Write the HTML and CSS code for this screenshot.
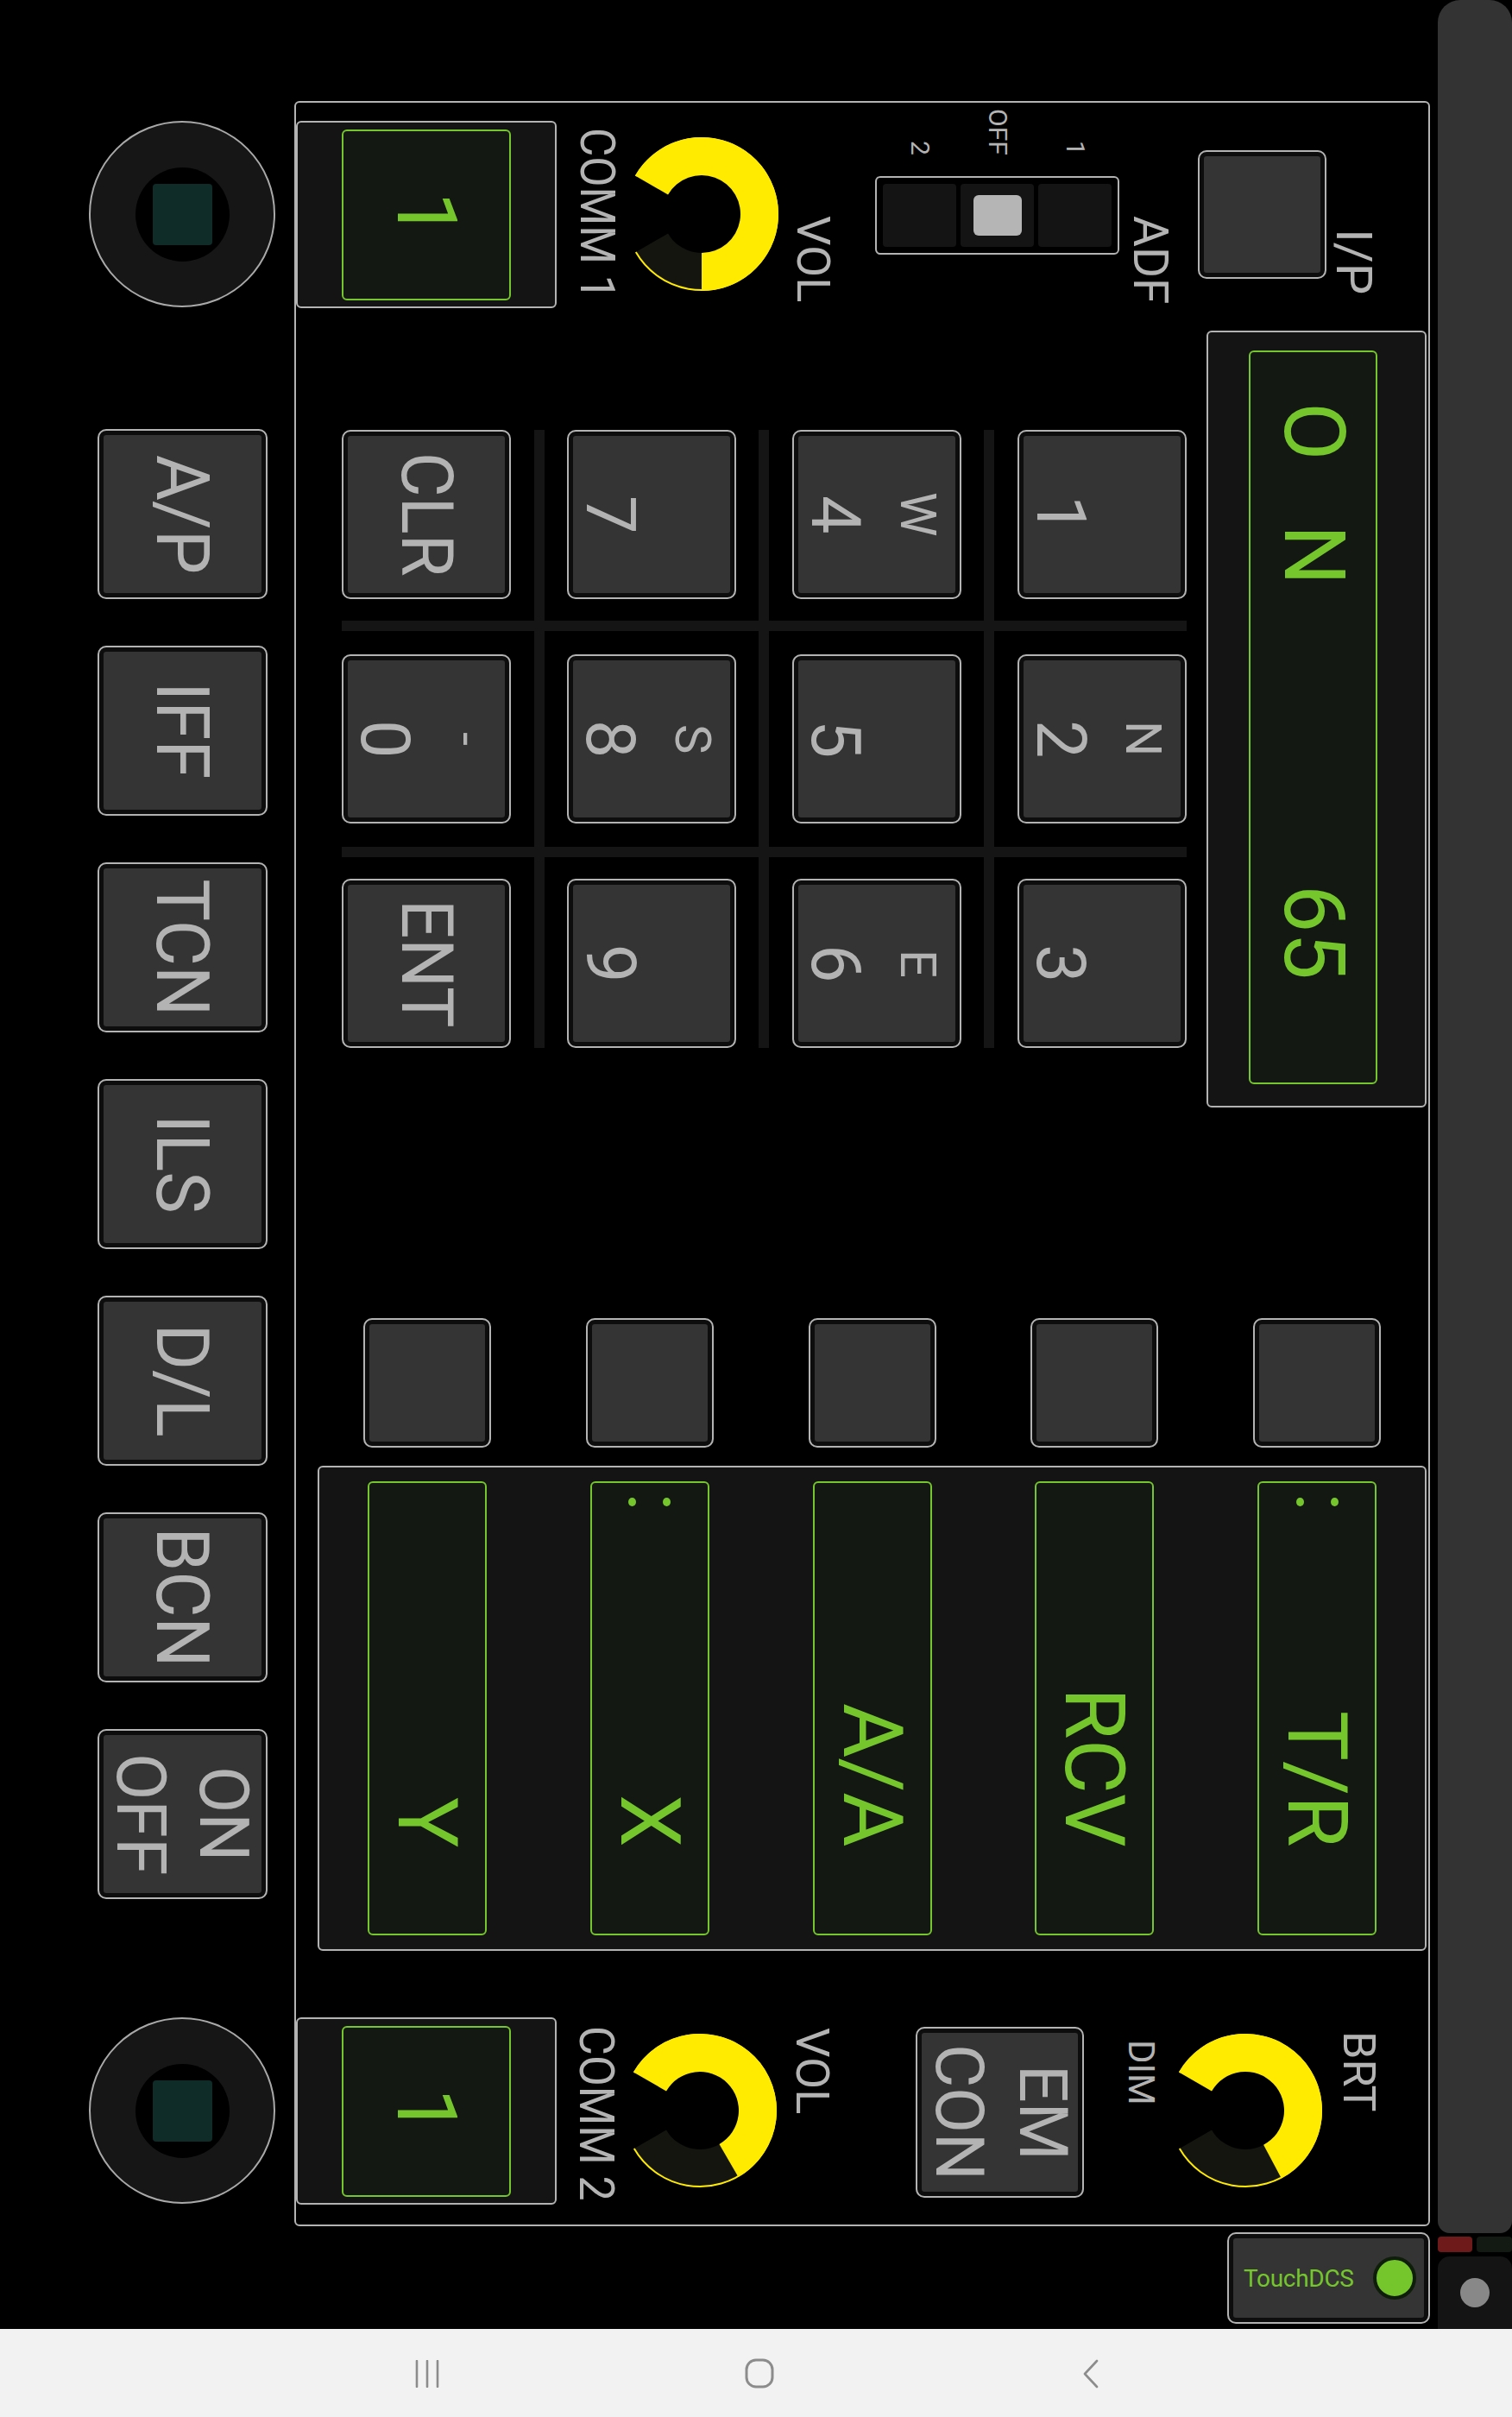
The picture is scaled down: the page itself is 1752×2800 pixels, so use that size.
FILE: index.html
```html
<!DOCTYPE html>
<html lang="en">
<head>
<meta charset="utf-8">
<title>TouchDCS</title>
<link rel="stylesheet" href="styles.css">
</head>
<body>
<div class="screen">
  <div class="app">
    <div class="leftcol">
      <div class="jack jack-top"><div class="jack-hole"><div class="jack-core"></div></div></div>
      <div class="sidebtns">
        <div class="btn side"><span class="vt">A/P</span></div>
        <div class="btn side"><span class="vt">IFF</span></div>
        <div class="btn side"><span class="vt">TCN</span></div>
        <div class="btn side"><span class="vt">ILS</span></div>
        <div class="btn side"><span class="vt">D/L</span></div>
        <div class="btn side"><span class="vt">BCN</span></div>
        <div class="btn side"><span class="vt two">ON<br>OFF</span></div>
      </div>
      <div class="jack jack-bot"><div class="jack-hole"><div class="jack-core"></div></div></div>
    </div>

    <div class="midcol">
      <div class="panel">
        <div class="sec-top">
          <div class="comm"><div class="lcd"><span class="vt">1</span></div></div>
          <div class="lbl l-comm1">COMM 1</div>
          <svg class="knob k-top" viewBox="0 0 180 180">
            <path d="M12.93 45.5A89 89 0 1 1 12.93 134.5L51.03 112.5A45 45 0 1 0 51.03 67.5Z" fill="#15150f"/>
            <path d="M13.8 46A88 88 0 1 1 13.8 134" fill="none" stroke="#ffeb00" stroke-width="2"/>
            <path d="M12.93 45.5A89 89 0 1 1 90 179L90 135A45 45 0 1 0 51.03 67.5Z" fill="#ffeb00"/>
          </svg>
          <div class="lbl l-vol1">VOL</div>
          <div class="adf">
            <div class="adf-labels">
              <div class="adf-cell"><span class="vt">2</span></div>
              <div class="adf-cell"><span class="vt">OFF</span></div>
              <div class="adf-cell"><span class="vt">1</span></div>
            </div>
            <div class="switch">
              <div class="sw-cell"></div>
              <div class="sw-cell"><div class="sw-knob"></div></div>
              <div class="sw-cell"></div>
            </div>
          </div>
          <div class="lbl l-adf">ADF</div>
          <div class="btn ip"></div>
          <div class="lbl l-ip">I/P</div>
        </div>

        <div class="sec-mid">
          <div class="keypad">
            <div class="btn key"><span class="vt">CLR</span></div>
            <div class="btn key dual"><div class="kcol d"><span class="vt">7</span></div><div class="kcol l"></div></div>
            <div class="btn key dual"><div class="kcol d"><span class="vt">4</span></div><div class="kcol l"><span class="vt">W</span></div></div>
            <div class="btn key dual"><div class="kcol d"><span class="vt">1</span></div><div class="kcol l"></div></div>

            <div class="btn key dual"><div class="kcol d"><span class="vt">0</span></div><div class="kcol l"><span class="vt">-</span></div></div>
            <div class="btn key dual"><div class="kcol d"><span class="vt">8</span></div><div class="kcol l"><span class="vt">S</span></div></div>
            <div class="btn key dual"><div class="kcol d"><span class="vt">5</span></div><div class="kcol l"></div></div>
            <div class="btn key dual"><div class="kcol d"><span class="vt">2</span></div><div class="kcol l"><span class="vt">N</span></div></div>

            <div class="btn key"><span class="vt">ENT</span></div>
            <div class="btn key dual"><div class="kcol d"><span class="vt">9</span></div><div class="kcol l"></div></div>
            <div class="btn key dual"><div class="kcol d"><span class="vt">6</span></div><div class="kcol l"><span class="vt">E</span></div></div>
            <div class="btn key dual"><div class="kcol d"><span class="vt">3</span></div><div class="kcol l"></div></div>
          </div>
          <div class="disp">
            <div class="lcd">
              <span class="vt d-o">O</span>
              <span class="vt d-n">N</span>
              <span class="vt d-65">65</span>
            </div>
          </div>
        </div>

        <div class="sec-modes">
          <div class="smallbtns">
            <div class="btn sq"></div>
            <div class="btn sq"></div>
            <div class="btn sq"></div>
            <div class="btn sq"></div>
            <div class="btn sq"></div>
          </div>
          <div class="modes">
            <div class="lcd mode"><span class="vt">Y</span></div>
            <div class="lcd mode"><div class="dots"><i></i><i></i></div><span class="vt">X</span></div>
            <div class="lcd mode"><span class="vt">A/A</span></div>
            <div class="lcd mode"><span class="vt">RCV</span></div>
            <div class="lcd mode"><div class="dots"><i></i><i></i></div><span class="vt">T/R</span></div>
          </div>
        </div>

        <div class="sec-bot">
          <div class="comm comm2"><div class="lcd"><span class="vt">1</span></div></div>
          <div class="lbl l-comm2">COMM 2</div>
          <svg class="knob k-b1" viewBox="0 0 180 180">
            <path d="M12.93 45.5A89 89 0 1 1 12.93 134.5L51.03 112.5A45 45 0 1 0 51.03 67.5Z" fill="#15150f"/>
            <path d="M13.8 46A88 88 0 1 1 13.8 134" fill="none" stroke="#ffeb00" stroke-width="2"/>
            <path d="M12.93 45.5A89 89 0 1 1 134.5 167.08L112.5 128.97A45 45 0 1 0 51.03 67.5Z" fill="#ffeb00"/>
          </svg>
          <div class="lbl l-vol2">VOL</div>
          <div class="btn emcon"><span class="vt">EM<br>CON</span></div>
          <div class="lbl l-dim">DIM</div>
          <svg class="knob k-b2" viewBox="0 0 180 180">
            <path d="M12.93 45.5A89 89 0 1 1 12.93 134.5L51.03 112.5A45 45 0 1 0 51.03 67.5Z" fill="#15150f"/>
            <path d="M13.8 46A88 88 0 1 1 13.8 134" fill="none" stroke="#ffeb00" stroke-width="2"/>
            <path d="M12.93 45.5A89 89 0 1 1 131.78 168.58L111.13 129.73A45 45 0 1 0 51.03 67.5Z" fill="#ffeb00"/>
          </svg>
          <div class="lbl l-brt">BRT</div>
        </div>
      </div>

      <div class="btn status">
        <span class="status-text">TouchDCS</span>
        <span class="led"></span>
      </div>
    </div>

    <div class="rightcol">
      <div class="sbar"></div>
      <div class="tabs"><span class="tab-r"></span><span class="tab-g"></span></div>
      <div class="thumbbox"><span class="thumb"></span></div>
    </div>
  </div>

  <div class="navbar">
    <svg class="nv nv-recent" width="30" height="32" viewBox="0 0 30 32">
      <path d="M3 1V31M15 1V31M27 1V31" stroke="#8c8c8c" stroke-width="2.6" stroke-linecap="round"/>
    </svg>
    <svg class="nv nv-home" width="34" height="35" viewBox="0 0 34 35">
      <rect x="2" y="2" width="30" height="31" rx="11" fill="none" stroke="#8c8c8c" stroke-width="3"/>
    </svg>
    <svg class="nv nv-back" width="20" height="34" viewBox="0 0 20 34">
      <path d="M17 2L3 17L17 32" fill="none" stroke="#8c8c8c" stroke-width="2.6" stroke-linecap="round" stroke-linejoin="round"/>
    </svg>
  </div>
</div>
</body>
</html>
```

FILE: styles.css
```css
* { box-sizing: border-box; margin: 0; padding: 0; }
html, body { background: #000; }
body {
  width: 1752px;
  height: 2800px;
  overflow: hidden;
  font-family: Roboto, "Noto Sans", "Liberation Sans", sans-serif;
  color: #b3b3b3;
}
.screen { display: flex; flex-direction: column; width: 1752px; height: 2800px; }
.app { display: flex; height: 2698px; flex: none; }

.vt { writing-mode: vertical-rl; white-space: nowrap; text-align: center; display: block; }

/* generic button */
.btn {
  border: 2px solid #b3b3b3;
  border-radius: 10px;
  background: #343434;
  box-shadow: inset 0 0 0 5px #0d0d0d;
  display: flex;
  align-items: center;
  justify-content: center;
  flex: none;
  color: #b3b3b3;
}

/* green displays */
.lcd {
  border: 2px solid #74c62c;
  border-radius: 6px;
  background: #131812;
  color: #74c62c;
  display: flex;
  align-items: center;
  justify-content: center;
  flex: none;
}

/* left column */
.leftcol { margin-left: 103px; width: 216px; display: flex; flex-direction: column; align-items: center; flex: none; }
.jack {
  width: 216px; height: 216px; border-radius: 50%;
  border: 2px solid #a9a9a9; background: #161616;
  display: flex; align-items: center; justify-content: center; flex: none;
}
.jack-top { margin-top: 140px; }
.jack-bot { margin-top: 137px; }
.jack-hole { width: 109px; height: 109px; border-radius: 50%; background: #000; display: flex; align-items: center; justify-content: center; }
.jack-core { width: 69px; height: 71px; border-radius: 4px; background: #0f2c28; }
.sidebtns { margin-top: 141px; display: flex; flex-direction: column; gap: 54px; }
.side { width: 197px; height: 197px; }
.side .vt { font-size: 86px; line-height: 96px; transform: scaleY(0.95); }
.side .vt.two { font-size: 79px; line-height: 96px; transform: none; }

/* middle column */
.midcol { margin-left: 22px; width: 1316px; display: flex; flex-direction: column; flex: none; }
.panel {
  margin-top: 117px; width: 1316px; height: 2462px;
  border: 2px solid #b3b3b3; border-radius: 6px;
  display: flex; flex-direction: column; flex: none;
}

.lbl {
  writing-mode: vertical-rl; white-space: nowrap;
  width: 50px; line-height: 50px; flex: none; color: #b3b3b3;
}

/* top section */
.sec-top { display: flex; align-items: flex-start; height: 240px; flex: none; }
.comm {
  width: 302px; height: 217px; margin-top: 21px;
  border: 2px solid #b3b3b3; border-radius: 6px; background: #141414;
  display: flex; align-items: center; justify-content: center; flex: none;
}
.comm2 { margin-top: 0; }
.comm .lcd { width: 196px; height: 198px; }
.comm .vt { font-size: 96px; line-height: 100px; }
.l-comm1 { margin-left: 21.5px; margin-top: 29px; height: 194px; font-size: 55px; transform: scaleY(0.93); transform-origin: 50% 0; }
.knob { width: 180px; height: 180px; flex: none; display: block; }
.k-top { margin-left: 6.5px; margin-top: 39px; }
.l-vol1 { margin-left: 14px; margin-top: 131px; height: 97px; font-size: 54px; }

.adf { margin-left: 47px; width: 283px; display: flex; flex-direction: column; flex: none; }
.adf-labels { display: flex; gap: 5px; padding: 0 9px; height: 61px; }
.adf-cell { flex: 1; display: flex; justify-content: center; align-items: flex-end; }
.adf-cell .vt { font-size: 30px; line-height: 30px; }
.switch {
  margin-top: 24px; height: 91px;
  border: 2px solid #b3b3b3; border-radius: 6px; background: #000;
  padding: 7px; display: flex; gap: 5px;
}
.sw-cell { flex: 1; background: #141414; border-radius: 4px; display: flex; align-items: center; justify-content: center; }
.sw-knob { width: 56px; height: 47px; border-radius: 6px; background: #b5b5b5; }
.l-adf { margin-left: 10.5px; margin-top: 131px; height: 95px; font-size: 55px; }
.ip { width: 149px; height: 149px; margin-left: 30.5px; margin-top: 55px; }
.l-ip { margin-left: 6.5px; margin-top: 146px; height: 67px; font-size: 58px; }

/* keypad + display */
.sec-mid { display: flex; align-items: flex-start; height: 924px; flex: none; }
.keypad {
  margin-left: 53px; margin-top: 139px; width: 979px; height: 716px; flex: none;
  display: grid;
  grid-template-columns: repeat(4, 196px);
  grid-template-rows: repeat(3, 196px);
  column-gap: 65px; row-gap: 64px;
  background:
    linear-gradient(#151515, #151515) 222.5px 0 / 12px 100% no-repeat,
    linear-gradient(#151515, #151515) 483px 0 / 12px 100% no-repeat,
    linear-gradient(#151515, #151515) 743.5px 0 / 12px 100% no-repeat,
    linear-gradient(#151515, #151515) 0 221px / 100% 12px no-repeat,
    linear-gradient(#151515, #151515) 0 483px / 100% 12px no-repeat;
}
.key { width: 196px; height: 196px; }
.key .vt { font-size: 84px; line-height: 90px; transform: scaleY(0.95); }
.key.dual { justify-content: flex-start; }
.kcol { width: 96px; height: 100%; display: flex; align-items: center; justify-content: center; flex: none; }
.kcol.d .vt { font-size: 79px; line-height: 80px; transform: none; }
.kcol.l .vt { font-size: 58px; line-height: 60px; transform: none; }

.disp {
  margin-left: 23px; margin-top: 24px; width: 255px; height: 900px; flex: none;
  border: 2px solid #b3b3b3; border-radius: 6px; background: #141414;
  padding: 21px 0 0 47px;
}
.disp .lcd { width: 149px; height: 850px; flex-direction: column; justify-content: flex-start; }
.disp .vt { font-size: 98px; line-height: 100px; }
.d-o { margin-top: 58px; }
.d-n { margin-top: 75px; }
.d-65 { margin-top: 347px; }

/* mode row */
.sec-modes { margin-top: 244px; flex: none; }
.smallbtns { display: flex; gap: 109.75px; padding-left: 78px; }
.sq { width: 148px; height: 150px; }
.modes {
  margin-left: 25px; margin-top: 21px; width: 1285px; height: 562px;
  border: 2px solid #b3b3b3; border-radius: 6px; background: #141414;
  padding: 16px 0 0 56px; display: flex; gap: 119.75px;
}
.mode { width: 138px; height: 526px; flex-direction: column; justify-content: flex-end; padding-bottom: 100px; }
.mode .vt { font-size: 97px; line-height: 100px; }
.dots { display: flex; gap: 31px; margin-top: 17px; margin-bottom: auto; }
.dots i { display: block; width: 9px; height: 10px; border-radius: 50%; background: #74c62c; }

/* bottom section */
.sec-bot { margin-top: 77px; display: flex; align-items: flex-start; height: 217px; flex: none; }
.l-comm2 { margin-left: 20.5px; margin-top: 10px; height: 200px; font-size: 56px; transform: scaleY(0.93); transform-origin: 50% 0; }
.k-b1 { margin-left: 5.5px; margin-top: 18px; }
.l-vol2 { margin-left: 15px; margin-top: 12px; height: 96px; font-size: 54px; }
.emcon { margin-left: 95px; margin-top: 11px; width: 195px; height: 198px; }
.emcon .vt { font-size: 77px; line-height: 97px; }
.l-dim { margin-left: 41px; margin-top: 26px; height: 70px; font-size: 42px; }
.k-b2 { margin-left: 6px; margin-top: 18px; }
.l-brt { margin-left: 15.5px; margin-top: 16px; height: 90px; font-size: 52px; }

/* status */
.status {
  align-self: flex-end; margin-top: 7px; width: 235px; height: 106px;
  justify-content: flex-start; padding: 0 14px 0 17px;
}
.status-text { font-size: 28px; color: #74c62c; letter-spacing: -0.3px; }
.led { margin-left: auto; width: 50px; height: 50px; border-radius: 50%; background: #74c62c; border: 4px solid #0f1d0b; }

/* right column */
.rightcol { margin-left: 9px; width: 86px; display: flex; flex-direction: column; flex: none; }
.sbar { height: 2587px; background: #333; border-radius: 26px 26px 14px 14px; flex: none; }
.tabs { margin-top: 4px; height: 18px; display: flex; gap: 5px; flex: none; }
.tab-r { width: 40px; background: #6e1a1a; border-radius: 4px; }
.tab-g { flex: 1; background: #131a13; border-radius: 4px; }
.thumbbox { margin-top: 5px; height: 84px; background: #141414; border-radius: 14px 14px 0 0; display: flex; align-items: center; justify-content: center; flex: none; }
.thumb { width: 34px; height: 34px; border-radius: 50%; background: #888; }

/* navigation bar */
.navbar { height: 102px; background: #f2f2f2; display: flex; align-items: flex-start; flex: none; }
.nv { display: block; flex: none; }
.nv-recent { margin-left: 480px; margin-top: 36px; }
.nv-home { margin-left: 353px; margin-top: 34px; }
.nv-back { margin-left: 357px; margin-top: 35px; }
```
